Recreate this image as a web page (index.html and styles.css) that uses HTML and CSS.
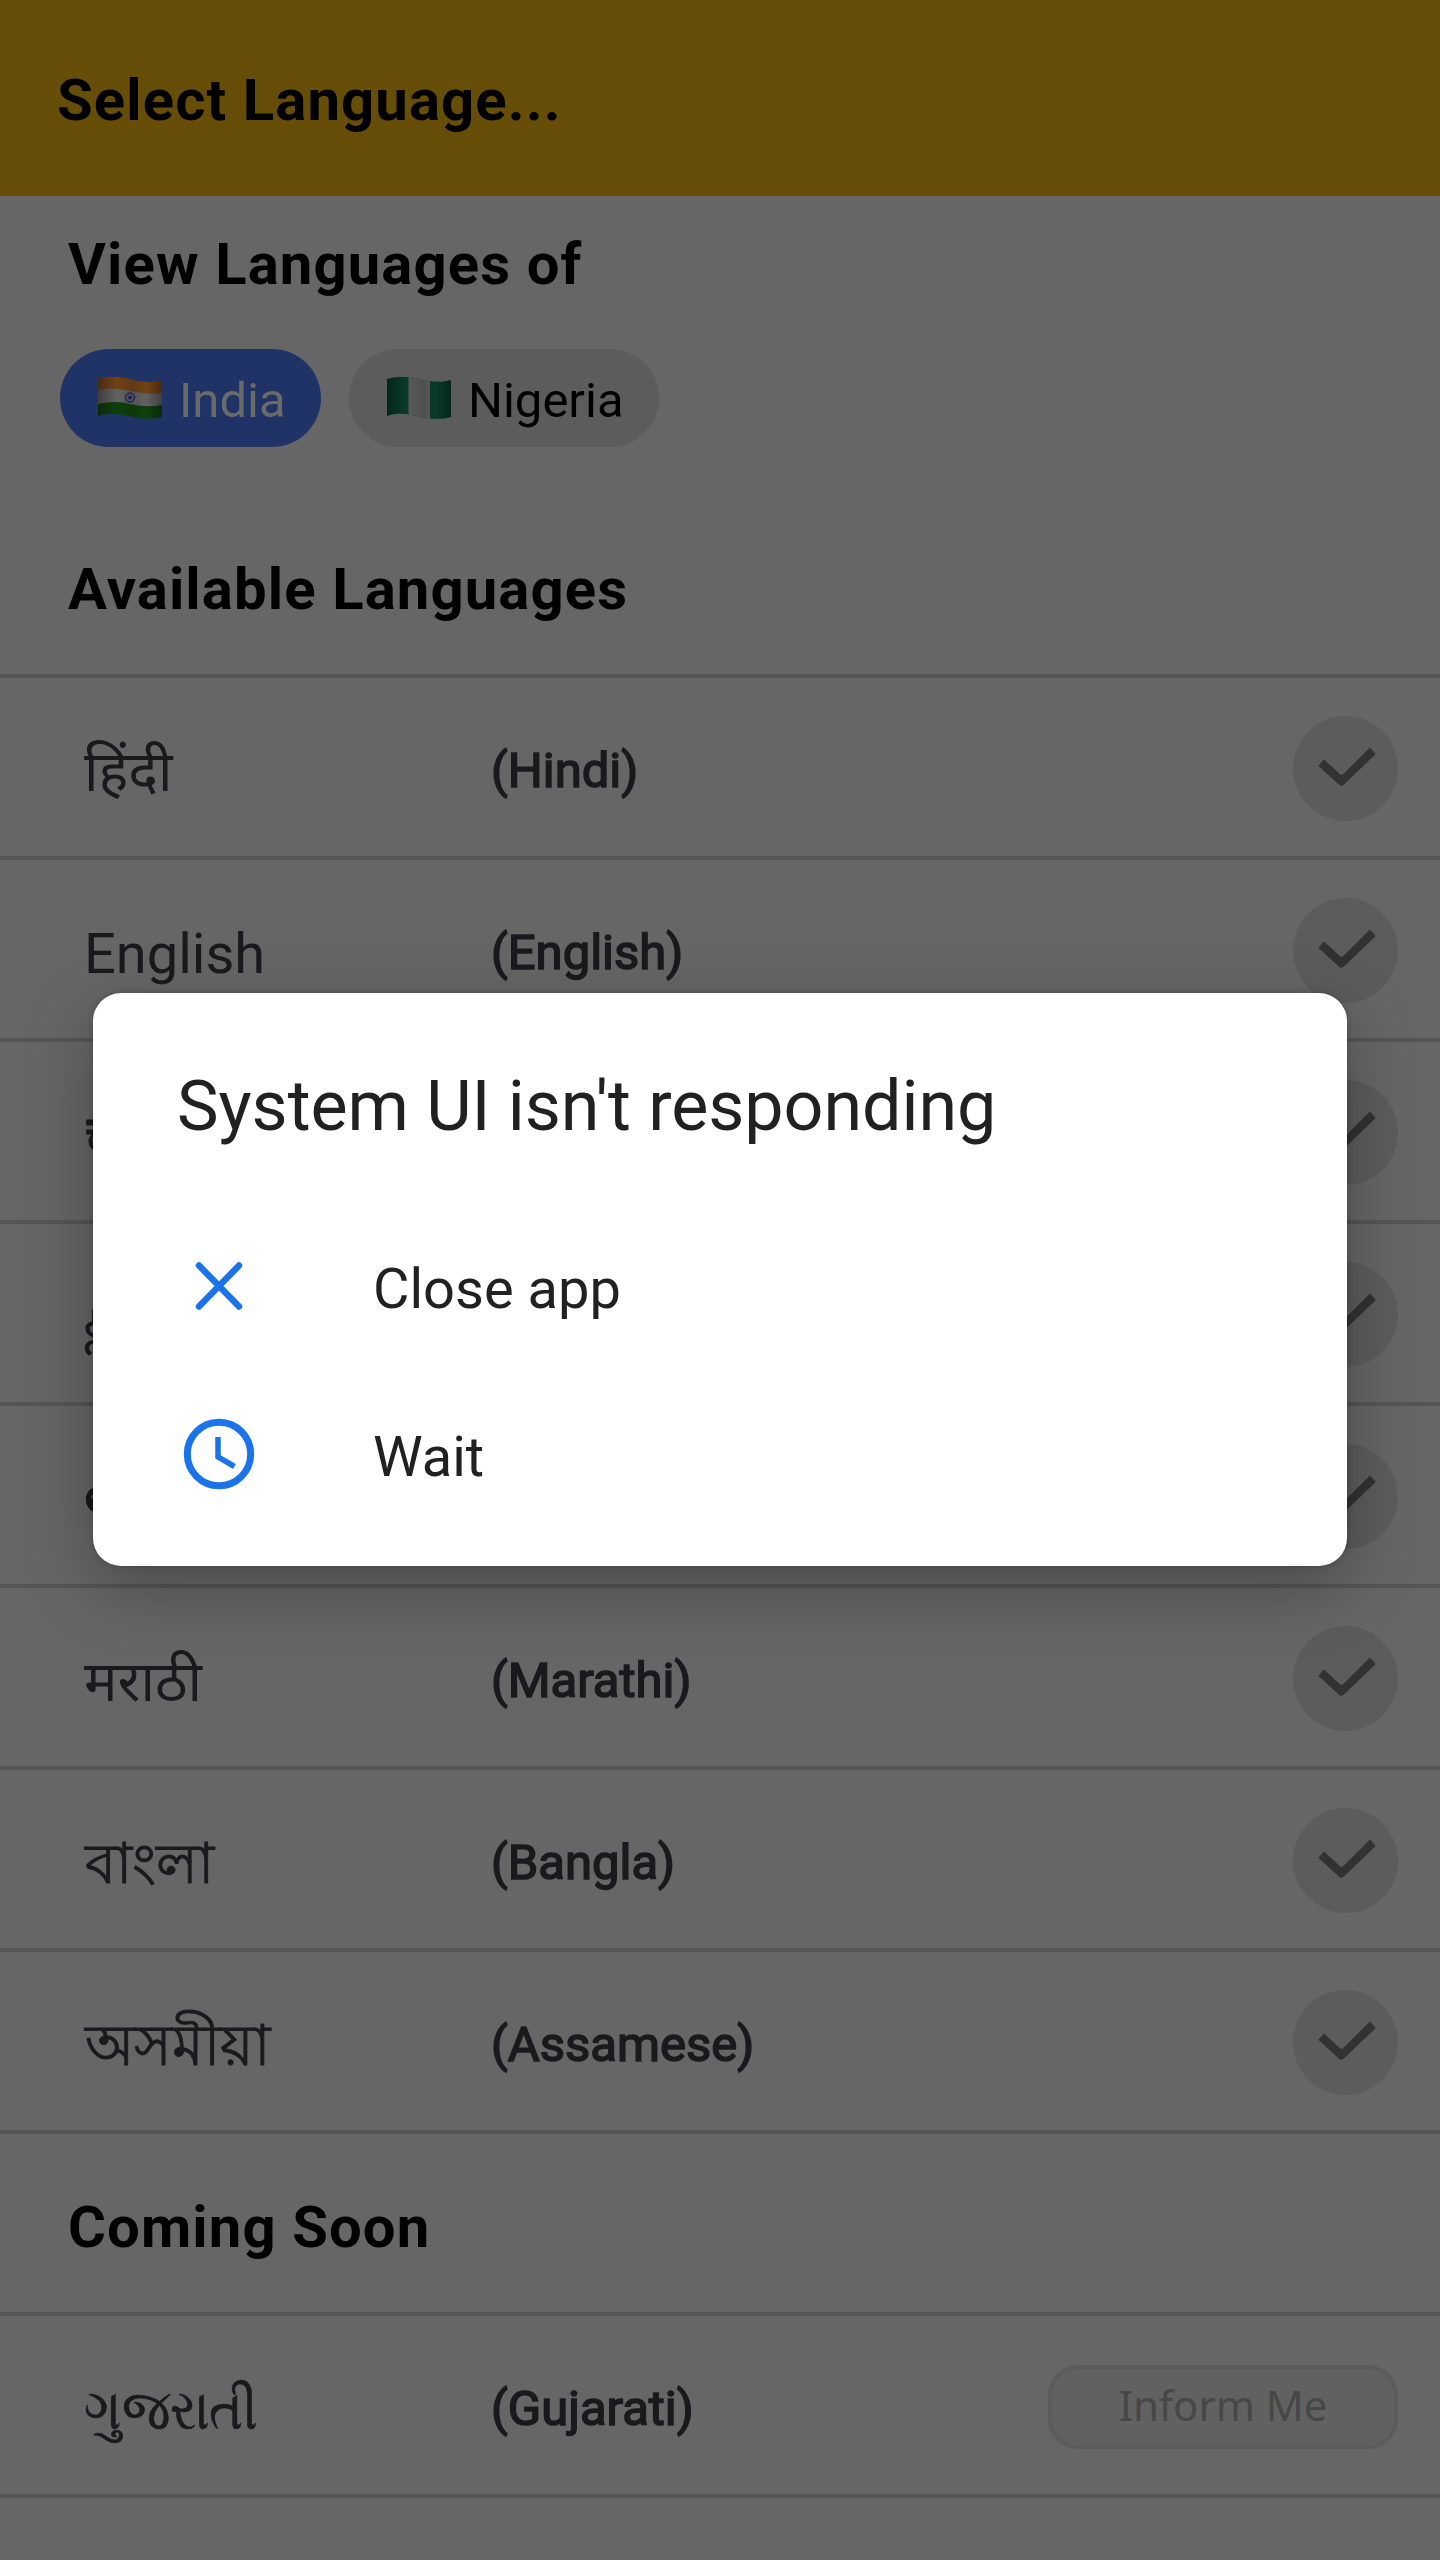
FILE: index.html
```html
<!DOCTYPE html>
<html lang="en">
<head>
<meta charset="utf-8">
<title>Select Language</title>
<link rel="stylesheet" href="styles.css">
</head>
<body>
<svg class="defs" width="0" height="0">
  <symbol id="check" viewBox="0 0 105 105"><path d="M25.3 49.7 31 43.5 47 58.2Q48.5 59.2 50 58.2L77 31.6 82.7 38 51 68.6Q48.5 71 46 68.8Z"/></symbol>
  <clipPath id="wave"><path d="M0 2C10-1 22-1 32 2S54 6 64 3V40C54 43 42 42 32 39.500S10 35 0 39Z"/></clipPath>
  <linearGradient id="shade"><stop offset="0" stop-opacity=".4"/><stop offset=".3" stop-opacity=".06"/><stop offset=".55" stop-opacity=".2"/><stop offset=".75" stop-opacity=".06"/><stop offset="1" stop-opacity=".4"/></linearGradient>
</svg>
<header class="bar"><h1 class="heading title">Select Language...</h1></header>
<main>
  <h2 class="heading view">View Languages of</h2>
  <div class="chips">
    <div class="chip chip-on"><svg class="flag" viewBox="0 0 64 42"><g clip-path="url(#wave)"><path fill="#784719" d="M0-2H64V20H0Z"/><path fill="#686868" d="M0 13Q16 10 32 14T64 16V30H0Z"/><path fill="#0f450d" d="M0 27Q16 23 32 27T64 28V44H0Z"/><path fill="url(#shade)" d="M0-2H64V44H0Z"/></g><circle cx="32" cy="20.500" r="4.500" fill="#505160" stroke="#22244e" stroke-width="1.300"/><circle cx="32" cy="20.500" r="1.900" fill="#22244e"/></svg><span>India</span></div>
    <div class="chip"><svg class="flag" viewBox="0 0 64 42"><g clip-path="url(#wave)"><path fill="#083f2b" d="M0-2H64V44H0Z"/><path fill="#626264" d="M21.500-2H43V44H21.500Z"/><path fill="url(#shade)" d="M0-2H64V44H0Z"/></g></svg><span>Nigeria</span></div>
  </div>
  <h2 class="heading available">Available Languages</h2>
  <ul class="list">
    <li class="row"><span class="native" lang="hi">हिंदी</span><span class="name">(Hindi)</span><svg class="check"><use href="#check"/></svg></li>
    <li class="row"><span class="native">English</span><span class="name">(English)</span><svg class="check"><use href="#check"/></svg></li>
    <li class="row"><span class="native kannada" lang="kn">ಕನ್ನಡ</span><span class="name"></span><svg class="check"><use href="#check"/></svg></li>
    <li class="row"><span class="native tamil" lang="ta">தமிழ்</span><span class="name"></span><svg class="check"><use href="#check"/></svg></li>
    <li class="row"><span class="native telugu" lang="te">తెలుగు</span><span class="name"></span><svg class="check"><use href="#check"/></svg></li>
    <li class="row"><span class="native" lang="mr">मराठी</span><span class="name">(Marathi)</span><svg class="check"><use href="#check"/></svg></li>
    <li class="row"><span class="native bengali" lang="bn">বাংলা</span><span class="name">(Bangla)</span><svg class="check"><use href="#check"/></svg></li>
    <li class="row"><span class="native bengali assamese" lang="as">অসমীয়া</span><span class="name">(Assamese)</span><svg class="check"><use href="#check"/></svg></li>
  </ul>
  <h2 class="heading soon">Coming Soon</h2>
  <ul class="list">
    <li class="row"><span class="native gujarati" lang="gu">ગુજરાતી</span><span class="name">(Gujarati)</span><button class="inform">Inform Me</button></li>
    <li class="row"></li>
  </ul>
</main>
<section class="dialog" role="dialog">
  <h3 class="dialog-title">System UI isn't responding</h3>
  <div class="action"><svg class="icon" viewBox="0 0 84 84"><path d="M22 21.500 62 62.500M62 21.500 22 62.500" stroke-width="6.500" stroke-linecap="round"/></svg><span>Close app</span></div>
  <div class="action"><svg class="icon" viewBox="0 0 84 84"><circle cx="42" cy="42" r="31.700" stroke-width="7"/><path d="M41 25V45L57.500 54.500" stroke-width="5.500"/></svg><span>Wait</span></div>
</section>
</body>
</html>
```
FILE: styles.css
```css
* { box-sizing: border-box; }
body { margin: 0; width: 1440px; height: 2560px; overflow: hidden; position: relative; background: #666; color: #000; font-family: Roboto, "Noto Sans", sans-serif; }
h1, h2, h3, ul { margin: 0; padding: 0; list-style: none; }
.defs { position: absolute; }
.heading { font-size: 58px; font-weight: 700; line-height: 68px; letter-spacing: 1.12px; white-space: nowrap; }
.bar { height: 196px; background: #664e09; padding: 66px 0 0 57px; }
.view { padding: 34px 0 0 68px; height: 153px; }
.chips { display: flex; gap: 28px; padding-left: 60px; height: 98px; }
.chip { display: flex; align-items: center; height: 98px; width: 310px; padding-left: 38px; border-radius: 49px; background: #5c5c5c; font-size: 49px; line-height: 58px; }
.chip span { padding-top: 6px; margin-left: 17px; }
.chip-on { width: 261px; background: #1f3366; color: #6a6a6a; }
.flag { width: 64px; height: 42px; flex: none; }
.available { height: 227px; padding: 108px 0 0 68px; }
.soon { height: 182px; padding: 59px 0 0 68px; border-top: 4px solid #555; }
.row { display: flex; height: 182px; border-top: 4px solid #555; padding-left: 84px; color: #1a1a1e; white-space: nowrap; }
.native { width: 407px; font-size: 56px; line-height: 66px; padding-top: 61px; }
.kannada { font-size: 65px; padding-top: 57px; line-height: 60px; -webkit-text-stroke: 1px #1a1a1e; }
.tamil { -webkit-text-stroke: 1px #1a1a1e; }
.telugu { font-size: 62px; padding-top: 57px; line-height: 60px; -webkit-text-stroke: 1px #1a1a1e; }
.bengali { padding-left: 1px; -webkit-text-stroke: .9px #1a1a1e; }
.assamese { font-size: 57px; }
.gujarati { transform: scaleX(.915); transform-origin: 0 50%; -webkit-text-stroke: .6px #1a1a1e; }
.name { flex: 1; font-size: 49px; line-height: 58px; padding-top: 64px; -webkit-text-stroke: 1.6px #1a1a1e; }
.check { width: 105px; height: 105px; margin: 38px 42px 0 0; border-radius: 50%; background: #5c5c5c; fill: #323232; }
.inform { width: 350px; height: 84px; margin: 49px 42px 0 0; border: 4px solid #5c5c5c; border-radius: 30px; background: #616161; color: #474747; font: 42px "Noto Sans", sans-serif; letter-spacing: -.1px; padding: 0 0 5px; }
.dialog { position: absolute; left: 93px; top: 993px; width: 1254px; height: 573px; border-radius: 28px; background: #fff; color: #212121; padding: 72px 84px 0; box-shadow: 0 22px 70px rgba(0,0,0,.28), 0 0 6px rgba(0,0,0,.2); }
.dialog-title { font-size: 70px; font-weight: 400; line-height: 82px; letter-spacing: -.06px; margin-bottom: 55px; white-space: nowrap; }
.action { display: flex; align-items: center; height: 168px; font-size: 56px; line-height: 66px; }
.action span { padding-top: 6px; }
.icon { width: 84px; height: 84px; fill: none; stroke: #1a73e8; margin-right: 112px; }
```
